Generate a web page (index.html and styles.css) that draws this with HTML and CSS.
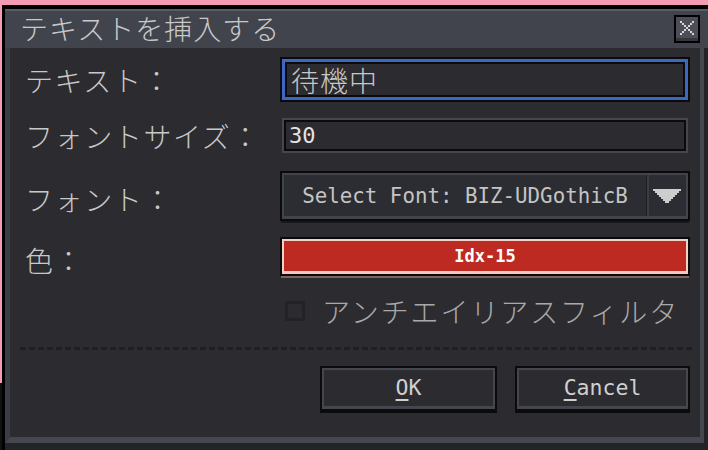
FILE: index.html
```html
<!DOCTYPE html>
<html lang="ja">
<head>
<meta charset="utf-8">
<title>テキストを挿入する</title>
<link rel="stylesheet" href="styles.css">
</head>
<body>
<div class="window">
  <div class="titlebar">
    <span class="title">テキストを挿入する</span>
    <div class="close">
      <svg width="14" height="14" viewBox="0 0 14 14" shape-rendering="crispEdges">
        <path fill="#d6d6d6" d="M0 0h2v2H0zM12 0h2v2h-2zM2 2h2v2H2zM10 2h2v2h-2zM4 4h2v2H4zM8 4h2v2H8zM6 6h2v2H6zM4 8h2v2H4zM8 8h2v2H8zM2 10h2v2H2zM10 10h2v2h-2zM0 12h2v2H0zM12 12h2v2h-2z"/>
      </svg>
    </div>
  </div>
  <div class="content">
    <div class="row r1">
      <span class="label">テキスト：</span>
      <div class="input focus"><span class="jp">待機中</span></div>
    </div>
    <div class="row r2">
      <span class="label">フォントサイズ：</span>
      <div class="input plain"><span class="mono">30</span></div>
    </div>
    <div class="row r3">
      <span class="label">フォント：</span>
      <div class="dropdown">
        <span class="dd-text mono">Select Font: BIZ-UDGothicB</span>
        <span class="dd-arrow">
          <svg width="28" height="14" viewBox="0 0 28 14" shape-rendering="crispEdges">
            <path fill="#cdcdcd" d="M0 0h28v2H0zM2 2h24v2H2zM4 4h20v2H4zM6 6h16v2H6zM8 8h12v2H8zM10 10h8v2h-8zM12 12h4v2h-4z"/>
          </svg>
        </span>
      </div>
    </div>
    <div class="row r4">
      <span class="label">色：</span>
      <div class="colorbtn"><span class="mono bold">Idx-15</span></div>
    </div>
    <div class="row r5">
      <span class="label"></span>
      <div class="check">
        <span class="box"></span>
        <span class="check-label">アンチエイリアスフィルタ</span>
      </div>
    </div>
    <div class="sep"></div>
    <div class="buttons">
      <div class="btn ok"><span class="mono"><u>O</u>K</span></div>
      <div class="btn cancel"><span class="mono"><u>C</u>ancel</span></div>
    </div>
  </div>
</div>
</body>
</html>
```
FILE: styles.css
```css
* { box-sizing: border-box; }
html, body { margin: 0; padding: 0; }
body {
  width: 708px;
  height: 450px;
  overflow: hidden;
  padding: 5px 0 0 2px;
  background: linear-gradient(#f59cb4 0 383px, #111 383px);
  font-family: "Noto Sans CJK JP", "Noto Sans", sans-serif;
}
.window {
  width: 706px;
  height: 445px;
  border-top: 4px solid #000;
  border-left: 3px solid #000;
  background: #232428;
  display: flex;
  flex-direction: column;
}
.titlebar {
  height: 39px;
  background: #41444c;
  border-top: 2px solid #595c63;
  display: flex;
  align-items: flex-start;
  padding-left: 15px;
}
.title {
  font-size: 28px;
  font-weight: 300;
  letter-spacing: 1px;
  color: #c9c9c9;
  line-height: 40px;
  margin-top: -3px;
}
.close {
  margin-left: auto;
  margin-right: 10px;
  margin-top: 6px;
  width: 22px;
  height: 24px;
  background: #4b4e56;
  border-bottom: 3px solid #34363c;
  box-shadow: 0 0 0 2px #000;
  display: flex;
  justify-content: center;
  padding-top: 4px;
}
.content {
  height: 395px;
  margin-right: 4px;
  background: #2b2b30;
  border-left: 5px solid #3b3d44;
  border-right: 4px solid #45474e;
  border-bottom: 6px solid #45474e;
  padding: 11px 12px 0 15px;
  display: flex;
  flex-direction: column;
}
.row {
  display: flex;
  align-items: center;
}
.label {
  width: 257px;
  flex: none;
  font-size: 28px;
  font-weight: 300;
  letter-spacing: 1.6px;
  color: #c8c8c8;
  white-space: nowrap;
  line-height: 1;
}
.r1 { height: 41px; }
.r2 { height: 35px; margin-top: 18px; }
.r3 { height: 46px; margin-top: 20px; }
.r4 { height: 35px; margin-top: 20px; }
.r5 { height: 26px; margin-top: 24px; }
.r3 .label, .r4 .label { padding-top: 6px; }
.mono {
  font-family: "DejaVu Sans Mono", "Liberation Mono", monospace;
  font-size: 20.8px;
  line-height: 1;
}
.bold { font-weight: bold; }
.input {
  width: 406px;
  height: 100%;
  display: flex;
  align-items: center;
  background: #2b2b30;
}
.input.focus {
  border: 3px solid #3d67c3;
  box-shadow: 0 0 0 2px #0b0b0d, inset 0 0 0 2px #0b0b0d;
  padding-left: 6px;
}
.jp {
  font-size: 28px;
  font-weight: 300;
  letter-spacing: 1px;
  color: #c8c8c8;
  line-height: 1;
}
.input.plain {
  border: 2px solid #45474e;
  box-shadow: inset 0 0 0 2px #0b0b0d;
  padding-left: 5px;
  color: #e4e4e4;
}
.input.plain .mono { font-size: 22px; }
.dropdown {
  width: 406px;
  height: 100%;
  display: flex;
  background: #2c2d32;
  border: 2px solid #42444b;
  border-bottom-width: 3px;
  box-shadow: 0 0 0 2px #0b0b0d, 0 3px 0 1px #16171a;
}
.dd-text {
  flex: 1;
  display: flex;
  align-items: center;
  justify-content: center;
  color: #c4c4c4;
  border-right: 1px solid #1c1d21;
  box-shadow: 2px 0 0 #3b3d44;
  padding-top: 1px;
}
.dd-arrow {
  width: 39px;
  display: flex;
  align-items: center;
  justify-content: center;
  padding-top: 1px;
}
.colorbtn {
  width: 406px;
  height: 100%;
  background: #bd2a21;
  border: 2px solid #f2cfc7;
  border-bottom: 3px solid #f0c9c1;
  box-shadow: 0 0 0 2px #0b0b0d, 0 3px 0 1px #7d6360;
  display: flex;
  align-items: center;
  justify-content: center;
  color: #ffffff;
}
.colorbtn .mono { font-size: 17px; }
.check {
  display: flex;
  align-items: center;
}
.box {
  width: 20px;
  height: 20px;
  border: 3px solid #222327;
  margin-left: 3px;
  margin-right: 17px;
}
.check-label {
  font-size: 28px;
  font-weight: 300;
  letter-spacing: 1.9px;
  color: #a9a9a9;
  line-height: 1;
  white-space: nowrap;
}
.sep {
  margin: 23px -4px 0 -5px;
  height: 3px;
  background: repeating-linear-gradient(90deg, #1e1f23 0 6px, transparent 6px 9px);
}
.buttons {
  display: flex;
  justify-content: flex-end;
  gap: 22px;
  margin-top: 18px;
}
.btn {
  height: 41px;
  background: #2b2b30;
  border: 2px solid #45474e;
  border-bottom-width: 3px;
  box-shadow: 0 0 0 2px #0b0b0d, 0 2px 0 2px #0b0b0d;
  display: flex;
  align-items: center;
  justify-content: center;
  color: #d0d0d0;
}
.btn .mono { font-size: 21.5px; }
.btn.ok { width: 173px; }
.btn.cancel { width: 171px; }
.btn u {
  text-decoration-thickness: 2px;
  text-underline-offset: 4px;
}
```
